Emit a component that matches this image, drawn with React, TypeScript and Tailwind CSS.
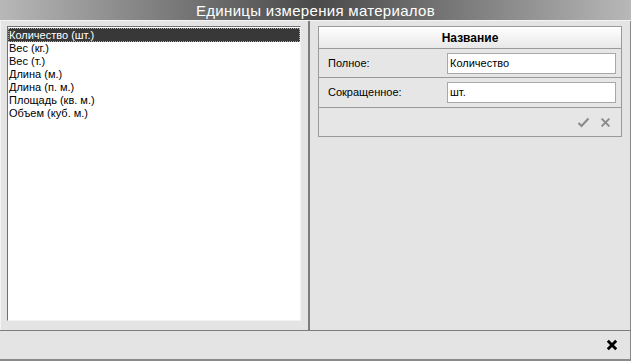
const units = [
  "Количество (шт.)",
  "Вес (кг.)",
  "Вес (т.)",
  "Длина (м.)",
  "Длина (п. м.)",
  "Площадь (кв. м.)",
  "Объем (куб. м.)",
];

function CheckIcon() {
  return (
    <svg width="13" height="11" viewBox="0 0 13 11">
      <path d="M1.5 6 L4.5 9 L11.5 1.5" fill="none" stroke="#8a8a8a" strokeWidth="2" />
    </svg>
  );
}

function CrossIcon({ color, size, stroke }: { color: string; size: number; stroke: number }) {
  return (
    <svg width={size} height={size} viewBox="0 0 10 10">
      <path d="M1.5 1.5 L8.5 8.5 M8.5 1.5 L1.5 8.5" fill="none" stroke={color} strokeWidth={stroke} />
    </svg>
  );
}

export default function App() {
  return (
    <div className="w-[631px] h-[361px] flex flex-col bg-[#e4e4e4] text-[11px] text-black font-['Liberation_Sans',Arial,sans-serif] overflow-hidden">
      {/* Title bar */}
      <div className="h-[21px] shrink-0 flex items-center justify-center bg-gradient-to-r from-[#b8b8b8] via-[#4a4a4a] to-[#b8b8b8] border-b border-[#f4f4f4]">
        <span className="text-white text-[15px] leading-none tracking-[0.3px]">Единицы измерения материалов</span>
      </div>

      {/* Body */}
      <div className="flex-1 flex min-h-0 border-l border-[#f4f4f4]">
        {/* Left list */}
        <div className="w-[309px] shrink-0 flex flex-col pl-[6px] pr-[7px] pt-[5px] pb-[9px] border-r-2 border-r-[#7c7c7c]">
          <div className="flex-1 bg-white border-t border-l border-[#6f6f6f] border-r border-b border-r-[#f2f2f2] border-b-[#f2f2f2] pt-[1px]">
            {units.map((u, i) => (
              <div
                key={u}
                className={
                  i === 0
                    ? "h-[14px] leading-[14px] pl-[1px] bg-[#383838] text-white outline-1 outline-dotted outline-[#aaaaaa] -outline-offset-1"
                    : "h-[13px] leading-[13px] pl-[1px]"
                }
              >
                {u}
              </div>
            ))}
          </div>
        </div>

        {/* Right editor */}
        <div className="flex-1 pl-[8px] pr-[8px] pt-[5px] border-r border-[#8a8a8a]">
          <div className="border border-[#9a9a9a] bg-[#e6e6e6]">
            <div className="h-[22px] flex items-center justify-center font-bold text-[12px] bg-gradient-to-b from-[#ffffff] to-[#e8e8e8] border-b border-[#9a9a9a]">
              Название
            </div>
            <div className="h-[29px] flex items-center justify-between pl-[9px] pr-[5px] border-b border-[#9a9a9a]">
              <span>Полное:</span>
              <div className="w-[169px] h-[21px] bg-white border border-[#a8a8a8] flex items-center px-[2px]">Количество</div>
            </div>
            <div className="h-[30px] flex items-center justify-between pl-[9px] pr-[5px] border-b border-[#9a9a9a]">
              <span>Сокращенное:</span>
              <div className="w-[169px] h-[21px] bg-white border border-[#a8a8a8] flex items-center px-[2px]">шт.</div>
            </div>
            <div className="h-[28px] flex items-center justify-end gap-[10px] pr-[10px]">
              <CheckIcon />
              <CrossIcon color="#8a8a8a" size={11} stroke={1.8} />
            </div>
          </div>
        </div>
      </div>

      {/* Footer */}
      <div className="h-[31px] shrink-0 flex items-center justify-end pr-[12px] border-t border-[#7c7c7c] border-b-2 border-b-[#8a8a8a] border-r border-r-[#8a8a8a]">
        <CrossIcon color="#000000" size={12} stroke={2.4} />
      </div>
    </div>
  );
}
